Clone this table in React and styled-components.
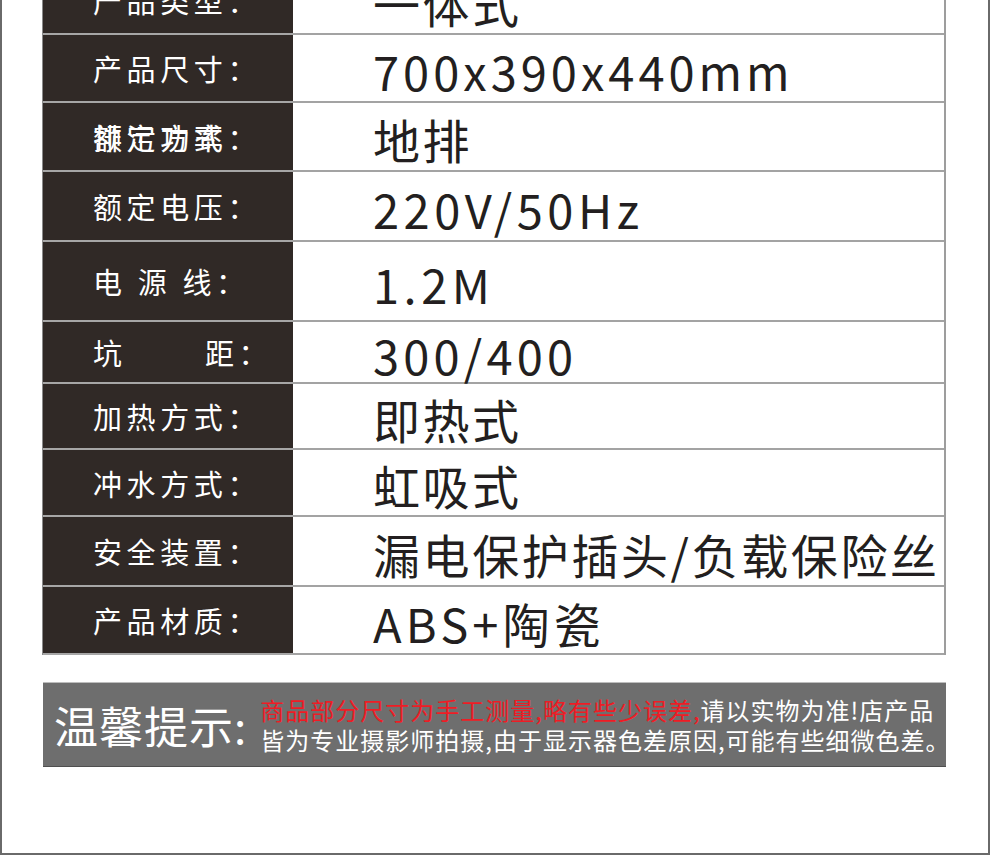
import React from "react";
import styled, { createGlobalStyle } from "styled-components";

const Global = createGlobalStyle`
  html, body { margin: 0; padding: 0; background: #fff; }
  body { font-family: "Noto Sans CJK SC", "Noto Sans", sans-serif; overflow: hidden; }
`;

const Frame = styled.div`
  box-sizing: border-box;
  width: 990px;
  height: 855px;
  border-left: 2px solid #6a6a6a;
  border-right: 2px solid #6a6a6a;
  border-bottom: 2px solid #6a6a6a;
  padding: 0 42px 0 40px;
  overflow: hidden;
  display: flex;
  flex-direction: column;
`;

const Table = styled.div`
  margin-top: -33px;
  display: grid;
  grid-template-columns: 250px 1fr;
  border-right: 2px solid #9d9d9d;
  border-left: 1px solid #8a8a8a;
`;

const Label = styled.div`
  box-sizing: border-box;
  height: ${(p) => p.$h}px;
  background: #302926;
  color: #fff;
  border-bottom: 2px solid #a6a6a6;
  display: flex;
  align-items: center;
  padding-left: 50px;
  font-size: 29px;
  letter-spacing: 4.6px;
  white-space: pre;
  position: relative;
`;

const Value = styled.div`
  box-sizing: border-box;
  height: ${(p) => p.$h}px;
  border-bottom: 2px solid #a3a3a3;
  display: flex;
  align-items: center;
  padding-left: 80px;
  padding-top: 4px;
  color: #231f20;
  font-size: 47px;
  font-weight: 400;
  letter-spacing: ${(p) => p.$ls}px;
  white-space: nowrap;
`;

const Ghost = styled.span`
  position: absolute;
  left: 50px;
  top: 0;
  bottom: 0;
  display: flex;
  align-items: center;
`;

const Notice = styled.div`
  margin-top: 27px;
  margin-left: 1px;
  height: 85px;
  box-sizing: border-box;
  background: #6e6e6e;
  border-top: 1px solid #bdbdbd;
  border-bottom: 1px solid #4f4f4f;
  display: flex;
  align-items: center;
  padding-left: 11px;
  gap: 13px;
`;

const NoticeTitle = styled.div`
  color: #fff;
  font-size: 44px;
  letter-spacing: 1px;
  white-space: nowrap;
`;

const NoticeBody = styled.div`
  display: flex;
  flex-direction: column;
  color: #fff;
  font-size: 24px;
  line-height: 30px;
  white-space: nowrap;
  letter-spacing: 1px;
`;

const Red = styled.span`
  color: #ee1c25;
`;

const rows = [
  { label: "产品类型：", value: "一体式", h: 68, ls: 2.5 },
  { label: "产品尺寸：", value: "700x390x440mm", h: 68, ls: 4 },
  { label: "overlap", value: "地排", h: 69, ls: 2.5 },
  { label: "额定电压：", value: "220V/50Hz", h: 70, ls: 4.5 },
  { label: "电 源 线：", value: "1.2M", h: 80, ls: 4.5 },
  { label: "坑　　 距：", value: "300/400", h: 62, ls: 4.2 },
  { label: "加热方式：", value: "即热式", h: 66, ls: 2.5 },
  { label: "冲水方式：", value: "虹吸式", h: 67, ls: 2.5 },
  { label: "安全装置：", value: "漏电保护插头/负载保险丝", h: 70, ls: 2.6 },
  { label: "产品材质：", value: "ABS+陶瓷", h: 68, ls: 4.2 },
];

export default function App() {
  return (
    <>
      <Global />
      <Frame>
        <Table>
          {rows.map((r, i) => (
            <React.Fragment key={i}>
              <Label $h={r.h}>
                {r.label === "overlap" ? (
                  <>
                    <span>额定功率：</span>
                    <Ghost>排污方式</Ghost>
                  </>
                ) : (
                  r.label
                )}
              </Label>
              <Value $h={r.h} $ls={r.ls}>{r.value}</Value>
            </React.Fragment>
          ))}
        </Table>
        <Notice>
          <NoticeTitle>温馨提示:</NoticeTitle>
          <NoticeBody>
            <div>
              <Red>商品部分尺寸为手工测量,略有些少误差,</Red>请以实物为准!店产品
            </div>
            <div>皆为专业摄影师拍摄,由于显示器色差原因,可能有些细微色差。</div>
          </NoticeBody>
        </Notice>
      </Frame>
    </>
  );
}
